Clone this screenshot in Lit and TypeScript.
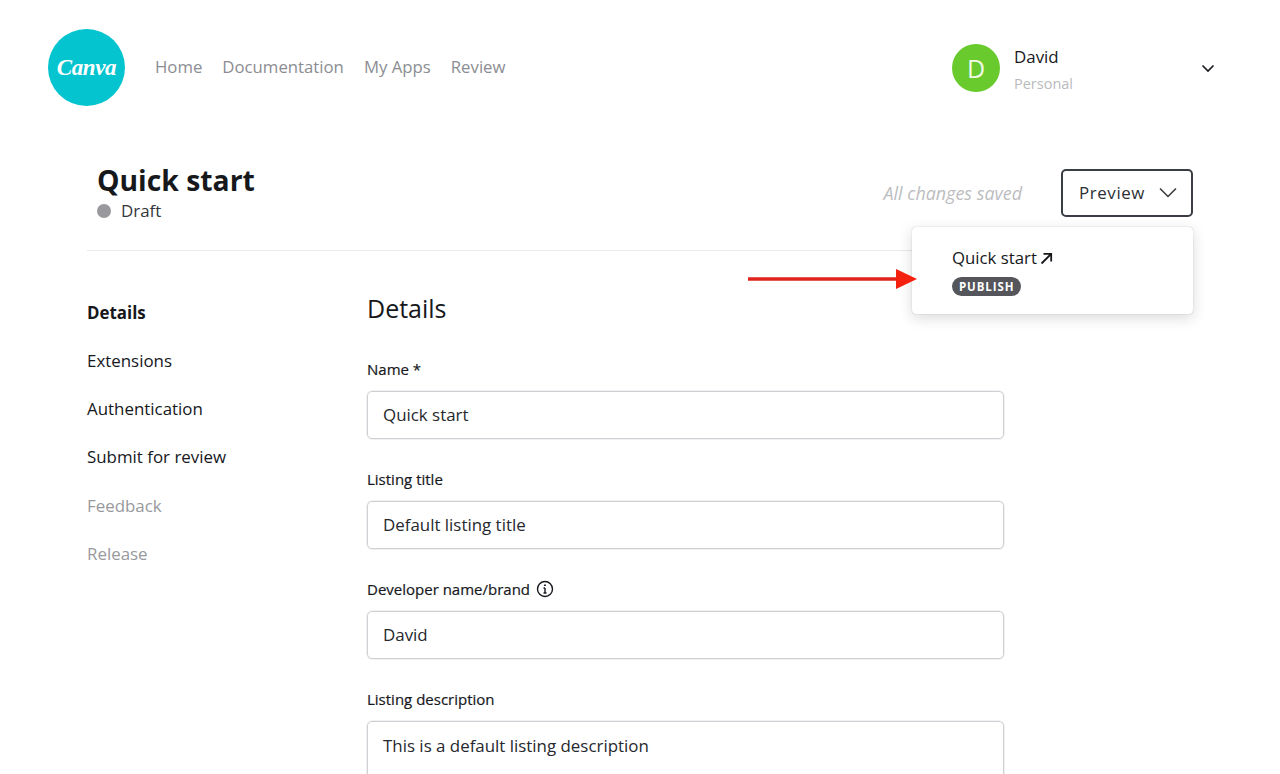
import { LitElement, html, css } from 'lit';
import { customElement } from 'lit/decorators.js';

const fields = [
  { label: 'Name *', value: 'Quick start' },
  { label: 'Listing title', value: 'Default listing title' },
  { label: 'Developer name/brand', value: 'David', info: true },
  { label: 'Listing description', value: 'This is a default listing description', tall: true },
];

const sideItems = [
  { label: 'Details', cls: 'active' },
  { label: 'Extensions', cls: '' },
  { label: 'Authentication', cls: '' },
  { label: 'Submit for review', cls: '' },
  { label: 'Feedback', cls: 'off' },
  { label: 'Release', cls: 'off' },
];

@customElement('app-root')
export class AppRoot extends LitElement {
  static styles = css`
    :host {
      display: block;
      height: 774px;
      overflow: hidden;
      background: #fff;
      color: #16181c;
      font-family: 'Open Sans', sans-serif;
      font-size: 16.9px;
    }

    .top {
      display: flex;
      align-items: center;
      height: 78px;
      padding: 29px 0 0 48px;
    }

    .logo {
      flex: none;
      align-self: flex-start;
      display: flex;
      align-items: center;
      justify-content: center;
      width: 77px;
      height: 77px;
      border-radius: 50%;
      background: #04c4cf;
      color: #fff;
      font-family: 'Liberation Serif', serif;
      font-style: italic;
      font-weight: 700;
      font-size: 23px;
      letter-spacing: -0.4px;
    }

    nav {
      display: flex;
      gap: 20px;
      margin-left: 30px;
      padding-bottom: 3px;
      font-size: 16.75px;
      color: #8b8d92;
    }

    .user {
      display: flex;
      align-items: center;
      margin-left: auto;
      width: 263px;
      margin-right: 65px;
    }

    .avatar {
      flex: none;
      display: flex;
      align-items: center;
      justify-content: center;
      width: 48px;
      height: 48px;
      border-radius: 50%;
      background: #69ca2d;
      color: #eef9e6;
      font-size: 25px;
      margin-bottom: 1px;
    }

    .who {
      margin-left: 14px;
      flex: 1;
    }

    .who .name {
      line-height: 24px;
      padding-top: 3px;
    }

    .who .plan {
      margin-top: 5px;
      font-size: 14.500px;
      line-height: 20px;
      color: #b9bbbe;
    }

    .page {
      position: relative;
      margin: 0 87px;
    }

    .head {
      display: flex;
      align-items: flex-start;
      height: 144px;
      box-sizing: border-box;
      padding: 56px 0 0 10px;
      border-bottom: 1px solid #e9e9ea;
    }

    h1 {
      margin: 0;
      font-size: 28.300px;
      line-height: 34px;
      font-weight: 700;
    }

    .status {
      display: flex;
      align-items: center;
      gap: 10px;
      margin-top: 2px;
      line-height: 24px;
      color: #33363b;
    }

    .dot {
      width: 14px;
      height: 14px;
      border-radius: 50%;
      background: #98989d;
    }

    .actions {
      display: flex;
      align-items: center;
      margin-left: auto;
      margin-top: 6px;
    }

    .saved {
      font-style: italic;
      font-size: 17.900px;
      color: #bcbdc0;
      margin-right: 39px;
    }

    .preview {
      display: flex;
      align-items: center;
      justify-content: space-between;
      box-sizing: border-box;
      width: 132px;
      height: 48px;
      padding: 0 14px 1px 16px;
      border: 2px solid #3a3d44;
      border-radius: 5px;
      font-weight: 500;
      letter-spacing: 0.6px;
      color: #2c2f35;
    }

    .menu {
      position: absolute;
      top: 120px;
      left: 825px;
      width: 281px;
      height: 87px;
      box-sizing: border-box;
      padding: 19px 40px 0;
      background: #fff;
      border-radius: 4px;
      box-shadow: 0 0 1px rgba(22, 24, 28, 0.35), 0 4px 14px rgba(22, 24, 28, 0.16);
      z-index: 2;
    }

    .menu .link {
      display: flex;
      align-items: center;
      gap: 3px;
      line-height: 24px;
      font-size: 16.800px;
    }

    .badge {
      display: inline-block;
      margin-top: 7px;
      padding: 0 7px;
      height: 19px;
      line-height: 19px;
      border-radius: 10px;
      background: #54565b;
      color: #fff;
      font-size: 11.500px;
      font-weight: 700;
      letter-spacing: 0.9px;
    }

    .arrow {
      position: absolute;
      top: 160px;
      left: 661px;
      z-index: 3;
    }

    .body {
      display: flex;
    }

    .side {
      flex: none;
      width: 280px;
      padding-top: 50px;
      display: flex;
      flex-direction: column;
      gap: 24.150px;
    }

    .side div {
      line-height: 24px;
    }

    .side .active {
      font-weight: 700;
    }

    .side .off {
      color: #98999d;
    }

    .form {
      width: 637px;
    }

    h2 {
      margin: 39px 0 0;
      font-size: 25px;
      line-height: 36px;
      font-weight: 400;
    }

    .field {
      margin-top: 33px;
    }

    .field + .field {
      margin-top: 30px;
    }

    label {
      display: flex;
      align-items: center;
      gap: 6px;
      height: 20px;
      font-size: 15px;
      font-weight: 500;
      -webkit-text-stroke: 0.2px #16181c;
    }

    .input {
      box-sizing: border-box;
      height: 48px;
      margin-top: 12px;
      padding: 0 15px;
      border: 1px solid #cfd0d3;
      box-shadow: 0 0 0 0.5px #e2e3e5;
      border-radius: 5px;
      line-height: 46px;
      color: #26282d;
    }

    .input.tall {
      height: 120px;
      padding-top: 1px;
    }
  `;

  render() {
    return html`
      <div class="top">
        <div class="logo">Canva</div>
        <nav>
          <span>Home</span>
          <span>Documentation</span>
          <span>My Apps</span>
          <span>Review</span>
        </nav>
        <div class="user">
          <div class="avatar">D</div>
          <div class="who">
            <div class="name">David</div>
            <div class="plan">Personal</div>
          </div>
          <svg width="14" height="9" viewBox="0 0 14 9" fill="none" stroke="#16181c" stroke-width="1.6">
            <path d="M1.500 1.500 7 7l5.500-5.500" />
          </svg>
        </div>
      </div>
      <div class="page">
        <div class="head">
          <div>
            <h1>Quick start</h1>
            <div class="status"><span class="dot"></span>Draft</div>
          </div>
          <div class="actions">
            <span class="saved">All changes saved</span>
            <div class="preview">
              Preview
              <svg width="18" height="11" viewBox="0 0 18 11" fill="none" stroke="#33363b" stroke-width="1.500">
                <path d="M1 1.500 9 9.500l8-8" />
              </svg>
            </div>
          </div>
        </div>
        <div class="menu">
          <div class="link">
            Quick start
            <svg width="13" height="13" viewBox="0 0 13 13" fill="none" stroke="#16181c" stroke-width="1.800">
              <path d="M1.500 11.500 11 2M3.500 1.800h7.700v7.700" />
            </svg>
          </div>
          <span class="badge">PUBLISH</span>
        </div>
        <svg class="arrow" width="170" height="24" viewBox="0 0 170 24">
          <path d="M0 10.250h148v3.500H0z" fill="#e0231c" />
          <path d="M148 2 169 12 148 22z" fill="#f5210f" />
        </svg>
        <div class="body">
          <div class="side">
            ${sideItems.map((s) => html`<div class=${s.cls}>${s.label}</div>`)}
          </div>
          <div class="form">
            <h2>Details</h2>
            ${fields.map(
              (f) => html`
                <div class="field">
                  <label>
                    ${f.label}
                    ${f.info
                      ? html`<svg width="18" height="18" viewBox="0 0 18 18" fill="none" stroke="#16181c" stroke-width="1.400">
                          <circle cx="9" cy="9" r="7.500" />
                          <path d="M9 8v5M7.500 8H9M7.500 13h3" />
                          <path d="M9 4.500v1.500" stroke-width="1.800" />
                        </svg>`
                      : ''}
                  </label>
                  <div class="input ${f.tall ? 'tall' : ''}">${f.value}</div>
                </div>
              `
            )}
          </div>
        </div>
      </div>
    `;
  }
}
